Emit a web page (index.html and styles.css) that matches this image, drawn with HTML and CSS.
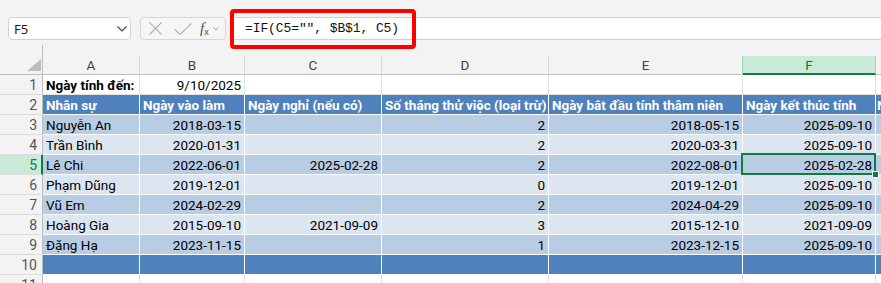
FILE: index.html
```html
<!DOCTYPE html>
<html lang="vi">
<head>
    <meta charset="UTF-8">
    <title>Thâm niên nhân sự</title>
    <link rel="stylesheet" href="styles.css">
</head>
<body>

<div class="formula-bar">
    <div class="name-box">
        <span>F5</span>
        <svg width="10" height="6" viewBox="0 0 10 6"><path d="M0.5 0.5l4.5 4.5 4.5-4.5" fill="none" stroke="#444" stroke-width="1.1"/></svg>
    </div>
    <div class="fx-tools">
        <svg class="ico-x" width="13" height="13" viewBox="0 0 13 13"><path d="M0.5 0.5l12 12M12.5 0.5l-12 12" stroke="#b3b3b3" stroke-width="1.1"/></svg>
        <svg class="ico-ok" width="18" height="12" viewBox="0 0 18 12"><path d="M0.5 6l5.5 5.5L17.5 0.5" fill="none" stroke="#b3b3b3" stroke-width="1.1"/></svg>
        <span class="fx"><i>f</i><sub>x</sub></span>
        <svg class="ico-more" width="6" height="4" viewBox="0 0 6 4"><path d="M0.5 0.5l2.5 2.5 2.5-2.5" fill="none" stroke="#a0a0a0" stroke-width="1"/></svg>
    </div>
    <div class="formula-input">=IF(C5="", $B$1, C5)</div>
    <!-- khung đỏ đánh dấu công thức -->
    <div class="callout"></div>
</div>

<div class="sheet">
    <div class="row">
        <div class="gap-rh"></div>
        <div class="gap"></div>
    </div>

    <div class="row col-heads">
        <div class="corner"><span class="tri"></span></div>
        <div class="ch">A</div>
        <div class="ch">B</div>
        <div class="ch">C</div>
        <div class="ch">D</div>
        <div class="ch before-sel">E</div>
        <div class="ch sel-col">F</div>
        <div class="ch"></div>
    </div>

    <div class="row plain">
        <div class="rh">1</div>
        <div class="cell bold">Ngày tính đến:</div>
        <div class="cell r">9/10/2025</div>
        <div class="cell"></div>
        <div class="cell"></div>
        <div class="cell"></div>
        <div class="cell"></div>
        <div class="cell"></div>
    </div>

    <div class="row head">
        <div class="rh">2</div>
        <div class="cell">Nhân sự</div>
        <div class="cell">Ngày vào làm</div>
        <div class="cell">Ngày nghỉ (nếu có)</div>
        <div class="cell">Số tháng thử việc (loại trừ)</div>
        <div class="cell">Ngày bắt đầu tính thâm niên</div>
        <div class="cell">Ngày kết thúc tính</div>
        <div class="cell g">N</div>
    </div>

    <div class="row band-a">
        <div class="rh">3</div>
        <div class="cell">Nguyễn An</div>
        <div class="cell r">2018-03-15</div>
        <div class="cell"></div>
        <div class="cell r">2</div>
        <div class="cell r">2018-05-15</div>
        <div class="cell r">2025-09-10</div>
        <div class="cell"></div>
    </div>

    <div class="row band-b">
        <div class="rh">4</div>
        <div class="cell">Trần Bình</div>
        <div class="cell r">2020-01-31</div>
        <div class="cell"></div>
        <div class="cell r">2</div>
        <div class="cell r">2020-03-31</div>
        <div class="cell r">2025-09-10</div>
        <div class="cell"></div>
    </div>

    <div class="row band-a">
        <div class="rh sel-row">5</div>
        <div class="cell">Lê Chi</div>
        <div class="cell r">2022-06-01</div>
        <div class="cell r">2025-02-28</div>
        <div class="cell r">2</div>
        <div class="cell r">2022-08-01</div>
        <div class="cell r active">2025-02-28</div>
        <div class="cell"></div>
    </div>

    <div class="row band-b">
        <div class="rh">6</div>
        <div class="cell">Phạm Dũng</div>
        <div class="cell r">2019-12-01</div>
        <div class="cell"></div>
        <div class="cell r">0</div>
        <div class="cell r">2019-12-01</div>
        <div class="cell r">2025-09-10</div>
        <div class="cell"></div>
    </div>

    <div class="row band-a">
        <div class="rh">7</div>
        <div class="cell">Vũ Em</div>
        <div class="cell r">2024-02-29</div>
        <div class="cell"></div>
        <div class="cell r">2</div>
        <div class="cell r">2024-04-29</div>
        <div class="cell r">2025-09-10</div>
        <div class="cell"></div>
    </div>

    <div class="row band-b">
        <div class="rh">8</div>
        <div class="cell">Hoàng Gia</div>
        <div class="cell r">2015-09-10</div>
        <div class="cell r">2021-09-09</div>
        <div class="cell r">3</div>
        <div class="cell r">2015-12-10</div>
        <div class="cell r">2021-09-09</div>
        <div class="cell"></div>
    </div>

    <div class="row band-a">
        <div class="rh">9</div>
        <div class="cell">Đặng Hạ</div>
        <div class="cell r">2023-11-15</div>
        <div class="cell"></div>
        <div class="cell r">1</div>
        <div class="cell r">2023-12-15</div>
        <div class="cell r">2025-09-10</div>
        <div class="cell"></div>
    </div>

    <div class="row head">
        <div class="rh">10</div>
        <div class="cell"></div>
        <div class="cell"></div>
        <div class="cell"></div>
        <div class="cell"></div>
        <div class="cell"></div>
        <div class="cell"></div>
        <div class="cell"></div>
    </div>

    <div class="row plain">
        <div class="rh">11</div>
        <div class="cell"></div>
        <div class="cell"></div>
        <div class="cell"></div>
        <div class="cell"></div>
        <div class="cell"></div>
        <div class="cell"></div>
        <div class="cell"></div>
    </div>
</div>

</body>
</html>
```

FILE: styles.css
```css
body {
    margin: 0;
    background-color: #f3f3f3;
    font-family: Roboto, "Liberation Sans", sans-serif;
    color: #000;
    overflow: hidden;
}

/* thanh công thức */
.formula-bar {
    position: relative;
    height: 45px;
    box-sizing: border-box;
    padding: 17px 0 0 8px;
    display: flex;
    align-items: flex-start;
}

.name-box {
    width: 123px;
    height: 23px;
    box-sizing: border-box;
    border: 1px solid #d1d1d1;
    border-radius: 4px;
    background-color: #fff;
    display: flex;
    align-items: center;
    justify-content: space-between;
    padding: 0 3px 0 5px;
    font-family: "Noto Sans", sans-serif;
    font-size: 13px;
    color: #222;
}

.fx-tools {
    margin-left: 9px;
    width: 86px;
    height: 23px;
    box-sizing: border-box;
    border: 1px solid #d6d6d6;
    border-radius: 4px;
    background-color: #f6f6f6;
    display: flex;
    align-items: center;
    padding-left: 8px;
}

.ico-ok {
    margin-left: 12px;
}

.fx {
    margin-left: 8px;
    font-family: "Liberation Serif", serif;
    font-size: 15px;
    color: #505050;
    line-height: 1;
}

.fx sub {
    font-family: "Liberation Sans", sans-serif;
    font-size: 9px;
    vertical-align: -2px;
}

.ico-more {
    margin-left: 4px;
}

.formula-input {
    margin-left: 6px;
    flex: 1;
    height: 23px;
    box-sizing: border-box;
    background-color: #fff;
    border-top: 1px solid #d1d1d1;
    border-bottom: 1px solid #d1d1d1;
    padding-left: 13px;
    font-family: "Liberation Mono", monospace;
    font-size: 13px;
    letter-spacing: -0.1px;
    line-height: 21px;
    color: #111;
    white-space: pre;
}

.callout {
    position: absolute;
    left: 230px;
    top: 9px;
    width: 186px;
    height: 40px;
    box-sizing: border-box;
    border: 4px solid #fe0000;
    border-radius: 4px;
}

/* bảng tính */
.sheet {
    display: grid;
    grid-template-columns: 43px 97px 105px 137px 167px 194px 133px 1fr;
    grid-template-rows: 11px 19px;
    grid-auto-rows: 20px;
}

.row {
    display: contents;
}

.gap-rh {
    border-right: 1px solid #bdbdbd;
}

.gap {
    grid-column: 2 / -1;
}

.corner,
.ch,
.rh,
.cell {
    box-sizing: border-box;
    border-right: 1px solid #e1e1e1;
    border-bottom: 1px solid #e1e1e1;
    white-space: nowrap;
    overflow: hidden;
}

.corner {
    background-color: #f3f3f3;
    border-right-color: #bdbdbd;
    border-bottom-color: #bdbdbd;
    display: flex;
    justify-content: flex-end;
    align-items: flex-end;
    padding: 0 1px 3px 0;
}

.tri {
    width: 0;
    height: 0;
    border-left: 14px solid transparent;
    border-bottom: 12px solid #bcbcbc;
}

.ch {
    background-color: #f3f3f3;
    border-right-color: #dadada;
    border-bottom-color: #bdbdbd;
    text-align: center;
    font-size: 13.5px;
    line-height: 19px;
    color: #444;
}

.ch.before-sel {
    border-right-color: #9fd5b7;
}

.ch.sel-col {
    background-color: #caead8;
    color: #0e6f3a;
    border-right-color: #9fd5b7;
    border-bottom: 2px solid #107c41;
}

.rh {
    background-color: #f3f3f3;
    border-right-color: #bdbdbd;
    border-bottom-color: #dcdcdc;
    text-align: right;
    padding-right: 5px;
    font-size: 14px;
    line-height: 20px;
    color: #555;
}

.rh.sel-row {
    background-color: #caead8;
    color: #107c41;
    border-right: 2px solid #107c41;
    padding-right: 4px;
}

.cell {
    background-color: #fff;
    padding: 0 3px;
    font-size: 13.5px;
    line-height: 20px;
}

.cell.r {
    text-align: right;
}

.cell.bold {
    font-weight: bold;
}

.cell.g {
    padding-left: 1px;
}

/* kiểu bảng xanh */
.head .cell,
.band-a .cell,
.band-b .cell {
    border-color: #fff;
}

.head .cell {
    background-color: #4f81bd;
    color: #fff;
    font-weight: bold;
}

.band-a .cell {
    background-color: #b8cce4;
}

.band-b .cell {
    background-color: #dce6f1;
}

/* ô đang chọn */
.cell.active {
    position: relative;
    overflow: visible;
    z-index: 1;
}

.cell.active::after {
    content: "";
    position: absolute;
    left: -2px;
    top: -2px;
    right: -1px;
    bottom: -1px;
    border: 2px solid #107c41;
}

.cell.active::before {
    content: "";
    position: absolute;
    right: -4px;
    bottom: -4px;
    width: 5px;
    height: 5px;
    background-color: #107c41;
    border: 1px solid #fff;
    z-index: 2;
}
```
